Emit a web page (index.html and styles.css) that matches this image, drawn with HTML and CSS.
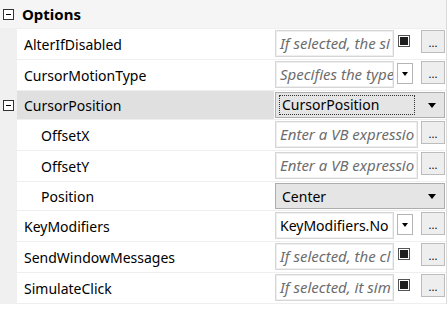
FILE: index.html
```html
<!DOCTYPE html>
<html lang="en">
<head>
  <meta charset="UTF-8">
  <title>Options</title>
  <link rel="stylesheet" href="styles.css">
</head>
<body>
  <div class="grid">
    <div class="row header">
      <div class="margin"><span class="expander"></span></div>
      <div class="title">Options</div>
    </div>

    <div class="row">
      <div class="margin"></div>
      <div class="name">AlterIfDisabled</div>
      <div class="value">
        <div class="box hint">If selected, the si</div>
        <span class="check"></span>
        <button class="more">...</button>
      </div>
    </div>

    <div class="row">
      <div class="margin"></div>
      <div class="name">CursorMotionType</div>
      <div class="value">
        <div class="box hint">Specifies the type</div>
        <span class="drop"></span>
        <button class="more">...</button>
      </div>
    </div>

    <div class="row group selected">
      <div class="margin"><span class="expander"></span></div>
      <div class="name">CursorPosition</div>
      <div class="value">
        <div class="combo"><span class="focus">CursorPosition</span><span class="arrow"></span></div>
      </div>
    </div>

    <div class="row">
      <div class="margin"></div>
      <div class="name child">OffsetX</div>
      <div class="value">
        <div class="box wide hint">Enter a VB expressio</div>
        <button class="more">...</button>
      </div>
    </div>

    <div class="row">
      <div class="margin"></div>
      <div class="name child">OffsetY</div>
      <div class="value">
        <div class="box wide hint">Enter a VB expressio</div>
        <button class="more">...</button>
      </div>
    </div>

    <div class="row group">
      <div class="margin"></div>
      <div class="name child">Position</div>
      <div class="value">
        <div class="combo"><span class="plain">Center</span><span class="arrow"></span></div>
      </div>
    </div>

    <div class="row">
      <div class="margin"></div>
      <div class="name">KeyModifiers</div>
      <div class="value">
        <div class="box">KeyModifiers.No</div>
        <span class="drop"></span>
        <button class="more">...</button>
      </div>
    </div>

    <div class="row">
      <div class="margin"></div>
      <div class="name">SendWindowMessages</div>
      <div class="value">
        <div class="box hint">If selected, the cl</div>
        <span class="check"></span>
        <button class="more">...</button>
      </div>
    </div>

    <div class="row">
      <div class="margin"></div>
      <div class="name">SimulateClick</div>
      <div class="value">
        <div class="box hint">If selected, it sim</div>
        <span class="check"></span>
        <button class="more">...</button>
      </div>
    </div>
  </div>
</body>
</html>
```

FILE: styles.css
```css
body {
  margin: 0;
  background: #fff;
  font-family: "Noto Sans", "Open Sans", sans-serif;
  font-size: 14px;
  color: #000;
}

.grid {
  width: 446px;
  border-right: 1px solid #dcdcdc;
}

.row {
  display: flex;
  height: 30px;
  border-bottom: 1px solid #efefef;
}

.row.group {
  height: 28px;
}

.row.header {
  height: 28px;
  background: #f5f5f5;
}

.margin {
  width: 17px;
  flex: none;
  background: #f0f0f0;
  display: flex;
  justify-content: center;
  align-items: center;
}

.expander {
  width: 9px;
  height: 9px;
  border: 1px solid #333;
  position: relative;
  background: #fff;
}

.expander::after {
  content: "";
  position: absolute;
  left: 2px;
  top: 4px;
  width: 5px;
  height: 1px;
  background: #000;
}

.header .margin {
  background: #f5f5f5;
}

.title {
  font-weight: 700;
  font-size: 15px;
  padding-left: 5px;
  display: flex;
  align-items: center;
}

.name {
  width: 257px;
  flex: none;
  padding-left: 7px;
  box-sizing: border-box;
  display: flex;
  align-items: center;
  white-space: nowrap;
}

.name.child {
  padding-left: 24px;
}

.selected .name {
  background: #e0e0e0;
}

.value {
  flex: 1;
  display: flex;
  align-items: flex-start;
  padding: 1px 1px 0 1px;
  gap: 3px;
}

.box {
  width: 113px;
  height: 25px;
  border: 1px solid #d6d6d6;
  box-shadow: inset 0 0 0 1px #efefef;
  padding-left: 4px;
  box-sizing: content-box;
  overflow: hidden;
  white-space: nowrap;
  line-height: 25px;
  flex: none;
}

.box.wide {
  width: 137px;
}

.hint {
  font-style: italic;
  font-size: 15px;
  color: #6d6d6d;
}

.check {
  margin: 5px 0 0 1px;
  width: 8px;
  height: 8px;
  border: 1px solid #555;
  padding: 1px;
  background: #1e1e1e content-box;
  flex: none;
}

.drop {
  width: 14px;
  height: 19px;
  border: 1px solid #b5b5b5;
  background: #fff;
  position: relative;
  flex: none;
  margin-top: 2px;
}

.drop::after {
  content: "";
  position: absolute;
  left: 4px;
  top: 8px;
  border-left: 3px solid transparent;
  border-right: 3px solid transparent;
  border-top: 4px solid #000;
}

.more {
  margin-left: auto;
  width: 24px;
  height: 23px;
  padding: 0 0 2px;
  border: 1px solid #bcbcbc;
  background: #eeeeee;
  font: 11px "Noto Sans", sans-serif;
  color: #000;
  display: flex;
  align-items: flex-end;
  justify-content: center;
  flex: none;
}

.combo {
  flex: 1;
  height: 24px;
  border: 1px solid #adadad;
  background: #e5e5e5;
  display: flex;
  align-items: center;
  position: relative;
  padding-left: 3px;
}

.focus {
  border: 1px dotted #333;
  width: 132px;
  padding-left: 2px;
  line-height: 18px;
}

.plain {
  padding-left: 3px;
}

.arrow {
  position: absolute;
  right: 8px;
  top: 10px;
  border-left: 4px solid transparent;
  border-right: 4px solid transparent;
  border-top: 5px solid #000;
}
```
